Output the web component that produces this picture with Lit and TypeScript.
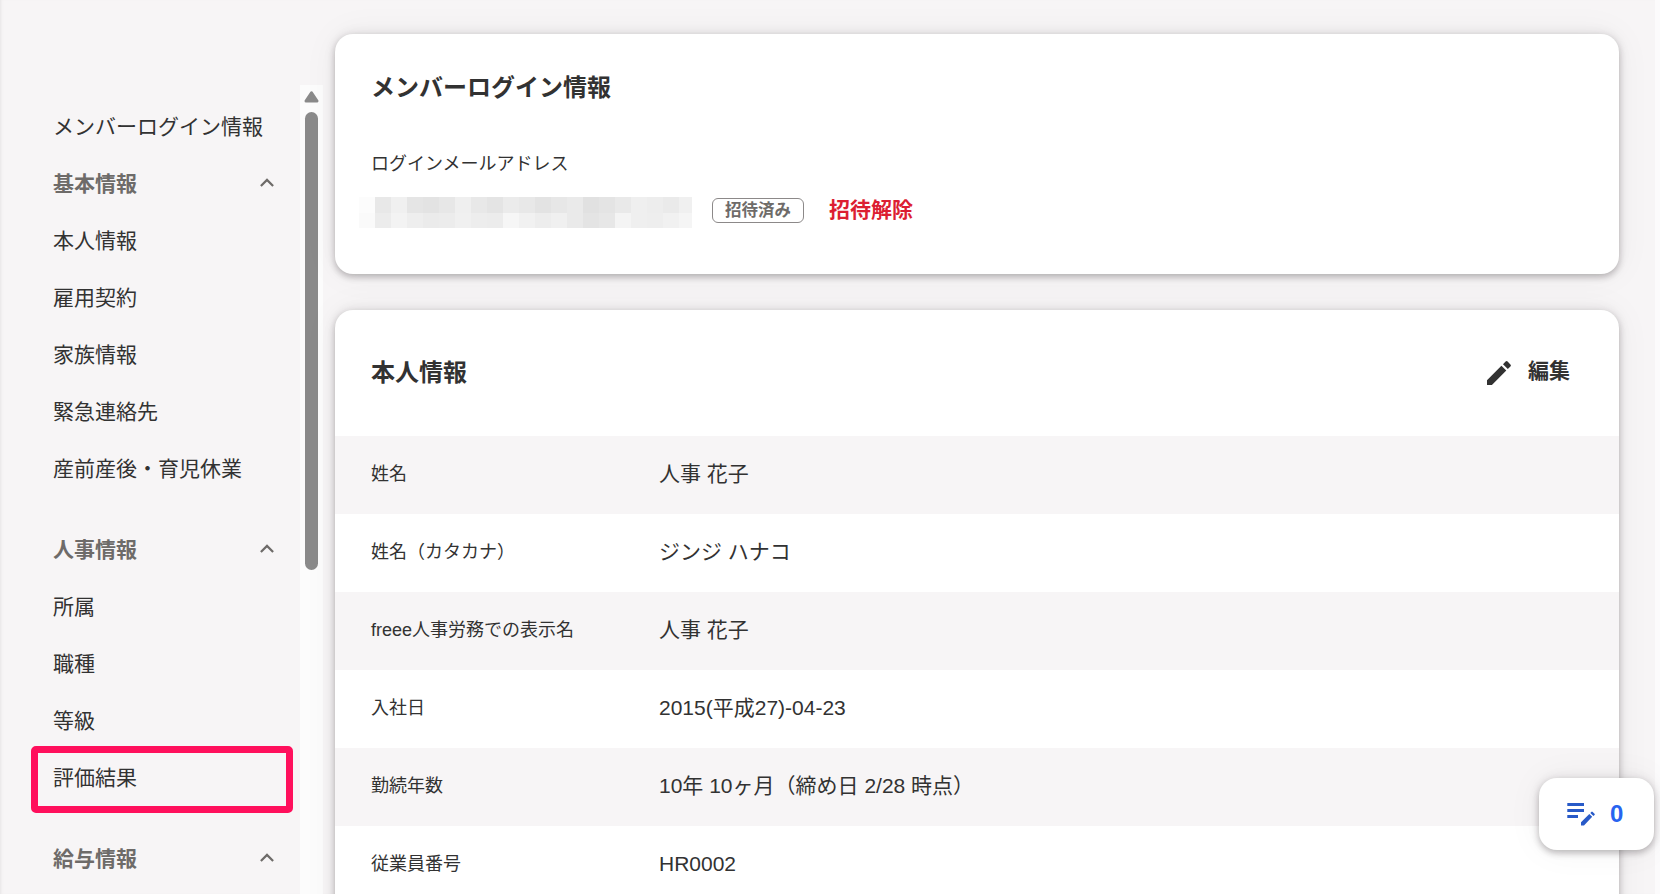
import { LitElement, html, css } from "lit";
import { customElement } from "lit/decorators.js";

interface NavGroup {
  title: string;
  items: string[];
}

const GROUPS: NavGroup[] = [
  { title: "基本情報", items: ["本人情報", "雇用契約", "家族情報", "緊急連絡先", "産前産後・育児休業"] },
  { title: "人事情報", items: ["所属", "職種", "等級", "評価結果"] },
  { title: "給与情報", items: [] },
];

const ROWS: [string, string][] = [
  ["姓名", "人事 花子"],
  ["姓名（カタカナ）", "ジンジ ハナコ"],
  ["freee人事労務での表示名", "人事 花子"],
  ["入社日", "2015(平成27)-04-23"],
  ["勤続年数", "10年 10ヶ月（締め日 2/28 時点）"],
  ["従業員番号", "HR0002"],
];

const MASK = [
  [252, 232, 240, 229, 227, 231, 239, 232, 228, 235, 232, 227, 231, 234, 225, 228, 233, 239, 237, 234, 240],
  [250, 236, 243, 238, 235, 236, 240, 237, 236, 246, 241, 237, 240, 234, 228, 231, 244, 239, 238, 241, 245],
];

@customElement("app-root")
export class AppRoot extends LitElement {
  static styles = css`
    :host {
      display: block;
      font-family: "Liberation Sans", "Noto Sans CJK JP", sans-serif;
      color: #323232;
    }
    * { box-sizing: border-box; }
    .page {
      position: relative;
      display: flex;
      width: 100%;
      height: 100vh;
      overflow: hidden;
      background: #f7f5f6;
      box-shadow: inset 3px 0 3px -2px #e6e4e5;
    }
    .nav { width: 300px; padding-top: 96px; flex: none; }
    .item, .group {
      display: flex;
      align-items: center;
      height: 57px;
      padding-left: 53px;
      font-size: 21px;
      white-space: nowrap;
      position: relative;
    }
    .group { color: #6e6b69; font-weight: 700; justify-content: space-between; padding-right: 26px; }
    .section + .section { margin-top: 24px; }
    .group svg { width: 14px; height: 9px; margin-top: 2px; }
    .marker {
      position: absolute;
      left: 31px;
      top: -1px;
      width: 262px;
      height: 67px;
      border: 7px solid #ff0f5c;
      border-radius: 5px;
    }
    .track {
      flex: none;
      width: 23px;
      margin-top: 85px;
      background: #fcfcfc;
      display: flex;
      flex-direction: column;
      align-items: center;
    }
    .track svg { width: 15px; height: 12px; margin-top: 6px; flex: none; }
    .thumb { width: 13px; height: 458px; margin-top: 9px; border-radius: 7px; background: #8a8a8a; flex: none; }
    .main { width: 1284px; margin-left: 12px; padding-top: 34px; flex: none; display: flex; flex-direction: column; gap: 36px; }
    .card {
      background: #fff;
      border-radius: 18px;
      flex: none;
      box-shadow: 0 0 12px rgba(40, 30, 35, 0.1), 0 3px 6px rgba(40, 30, 35, 0.25), 0 0 36px rgba(40, 30, 35, 0.05);
    }
    .login { height: 240px; padding: 36px 36px 0; }
    .title { margin: 0; font-size: 24px; line-height: 36px; font-weight: 700; }
    .label { font-size: 18px; line-height: 28px; margin-top: 44px; }
    .account { display: flex; align-items: flex-start; height: 31px; margin: 19px 0 0 -12px; }
    .mask { display: grid; grid-template-columns: repeat(20, 16px) 13px; grid-template-rows: 16px 15px; }
    .badge {
      width: 92px;
      height: 25px;
      margin: 1px 0 0 20px;
      border: 1px solid #8c8989;
      border-radius: 6px;
      color: #6e6b69;
      font-size: 16.5px;
      font-weight: 700;
      line-height: 22px;
      text-align: center;
    }
    .revoke { margin-left: 25px; font-size: 21px; font-weight: 700; color: #dc1e32; line-height: 26px; }
    .profile { height: 700px; }
    .head { display: flex; align-items: center; justify-content: space-between; height: 126px; padding: 0 49px 0 36px; }
    .edit { display: flex; align-items: center; gap: 17px; font-size: 21px; font-weight: 700; }
    .edit svg { width: 24px; height: 24px; }
    .edit span { line-height: 30px; padding-bottom: 4px; }
    .row { display: grid; grid-template-columns: 288px 1fr; align-items: center; height: 78px; padding: 0 0 3px 36px; }
    .row:nth-child(even) { background: #f7f5f6; }
    .key { font-size: 18px; line-height: 28px; }
    .value { font-size: 21px; line-height: 32px; }
    .edge { position: absolute; right: 0; top: 0; width: 5px; height: 100%; background: #fcfbfc; }
    .float {
      position: absolute;
      left: 1539px;
      top: 778px;
      width: 115px;
      height: 72px;
      border-radius: 18px;
      background: #fff;
      display: flex;
      align-items: center;
      padding-left: 28px;
      gap: 15px;
      color: #2864f0;
      font-size: 24px;
      font-weight: 700;
      box-shadow: 0 0 12px rgba(40, 30, 35, 0.1), 0 3px 6px rgba(40, 30, 35, 0.25), 0 0 36px rgba(40, 30, 35, 0.05);
    }
    .float svg { width: 28px; height: 24px; }
  `;

  private item(text: string) {
    return html`<div class="item">${text}${text === "評価結果" ? html`<span class="marker"></span>` : ""}</div>`;
  }

  render() {
    return html`
      <div class="page">
        <nav class="nav">
          ${this.item("メンバーログイン情報")}
          ${GROUPS.map(
            (g) => html`<section class="section">
              <div class="group">
                ${g.title}
                <svg viewBox="0 0 14 9"><path d="M0.9 8 L7 1.9 L13.1 8" fill="none" stroke="#6e6b69" stroke-width="2.2" /></svg>
              </div>
              ${g.items.map((t) => this.item(t))}
            </section>`
          )}
        </nav>
        <div class="track">
          <svg viewBox="0 0 15 12"><path d="M7.5 1.8 L13 10 H2 Z" fill="#8a8a8a" stroke="#8a8a8a" stroke-width="3" stroke-linejoin="round" /></svg>
          <div class="thumb"></div>
        </div>
        <main class="main">
          <section class="card login">
            <h2 class="title">メンバーログイン情報</h2>
            <div class="label">ログインメールアドレス</div>
            <div class="account">
              <div class="mask">
                ${MASK.flat().map((v) => html`<span style="background:rgb(${v},${v},${v})"></span>`)}
              </div>
              <span class="badge">招待済み</span>
              <span class="revoke">招待解除</span>
            </div>
          </section>
          <section class="card profile">
            <div class="head">
              <h2 class="title">本人情報</h2>
              <div class="edit">
                <svg viewBox="0 0 24 24" fill="#323232">
                  <path d="M0 19.2 L14.4 4.7 L19.3 9.6 L4.9 24 H0 Z M16 3.2 L18.6 0.6 Q19.6 -0.4 20.6 0.6 L23.4 3.4 Q24.4 4.4 23.4 5.4 L20.8 8 Z" />
                </svg>
                <span>編集</span>
              </div>
            </div>
            ${ROWS.map(([k, v]) => html`<div class="row"><div class="key">${k}</div><div class="value">${v}</div></div>`)}
          </section>
        </main>
        <div class="edge"></div>
        <div class="float">
          <svg viewBox="0 0 28 24" fill="#285ac8">
            <path d="M0.3 1 H17 V4 H0.3 Z M0.3 7 H17 V10 H0.3 Z M0.3 13 H11 V16 H0.3 Z M14 20.2 L22.3 11.9 L25.2 14.8 L17 23.5 H14 Z M23.3 10.9 L24.3 9.9 Q25 9.3 25.7 9.9 L27.5 11.7 Q28.1 12.4 27.5 13 L26.4 14 Z" />
          </svg>
          <span>0</span>
        </div>
      </div>
    `;
  }
}
